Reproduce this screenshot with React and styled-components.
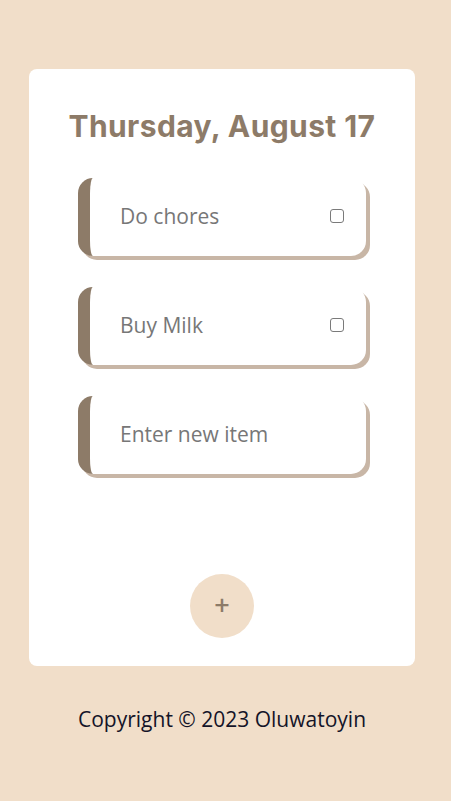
import styled, { createGlobalStyle } from "styled-components";

const GlobalStyle = createGlobalStyle`
  body {
    margin: 0;
    background-color: #f1dec9;
    font-family: "Open Sans", "Liberation Sans", sans-serif;
  }
`;

const Page = styled.div`
  width: 386px;
  padding: 69px 0 0 29px;
  display: flex;
  flex-direction: column;
  align-items: center;
`;

const Card = styled.div`
  width: 100%;
  height: 597px;
  box-sizing: border-box;
  background: #fff;
  border-radius: 8px;
  padding-top: 38px;
  display: flex;
  flex-direction: column;
  align-items: center;
`;

const Title = styled.h1`
  margin: 0 0 33px;
  font-family: "Inter", "Noto Sans", sans-serif;
  font-weight: 700;
  font-size: 30px;
  line-height: 38px;
  letter-spacing: 0.4px;
  color: #8d7b68;
`;

const List = styled.div`
  display: flex;
  flex-direction: column;
  gap: 31px;
`;

const Item = styled.div`
  width: 288px;
  height: 78px;
  box-sizing: border-box;
  display: flex;
  align-items: center;
  padding: 0 22px 2px 30px;
  background: #fff;
  border-left: 12px solid #8d7b68;
  border-radius: 15px;
  box-shadow: 4px 4px 0 #c8b6a6;
`;

const Label = styled.span`
  flex: 1;
  font-size: 21px;
  color: #777;
`;

const Input = styled.input`
  flex: 1;
  min-width: 0;
  border: none;
  outline: none;
  padding: 0;
  font-family: inherit;
  font-size: 21px;
  color: #777;
  background: transparent;

  &::placeholder {
    color: #777;
  }
`;

const Check = styled.input`
  appearance: none;
  width: 14px;
  height: 14px;
  margin: 0;
  box-sizing: border-box;
  border: 1.5px solid #7a7a7a;
  border-radius: 3px;
  background: #fff;

  &:checked {
    background: #8d7b68;
    border-color: #8d7b68;
  }
`;

const AddButton = styled.button`
  margin-top: auto;
  margin-bottom: 28px;
  width: 64px;
  height: 64px;
  border: none;
  border-radius: 50%;
  background: #f1dec9;
  color: #8d7b68;
  font-family: inherit;
  font-size: 27px;
  font-weight: 600;
  line-height: 1;
  padding: 0 0 3px;
  display: flex;
  align-items: center;
  justify-content: center;
`;

const Footer = styled.p`
  margin: 39px 0 0;
  font-size: 21px;
  color: #141428;
`;

const items = ["Do chores", "Buy Milk"];

export default function App() {
  return (
    <>
      <GlobalStyle />
      <Page>
        <Card>
          <Title>Thursday, August 17</Title>
          <List>
            {items.map((item) => (
              <Item key={item}>
                <Label>{item}</Label>
                <Check type="checkbox" />
              </Item>
            ))}
            <Item>
              <Input placeholder="Enter new item" />
            </Item>
          </List>
          <AddButton>+</AddButton>
        </Card>
        <Footer>Copyright © 2023 Oluwatoyin</Footer>
      </Page>
    </>
  );
}
